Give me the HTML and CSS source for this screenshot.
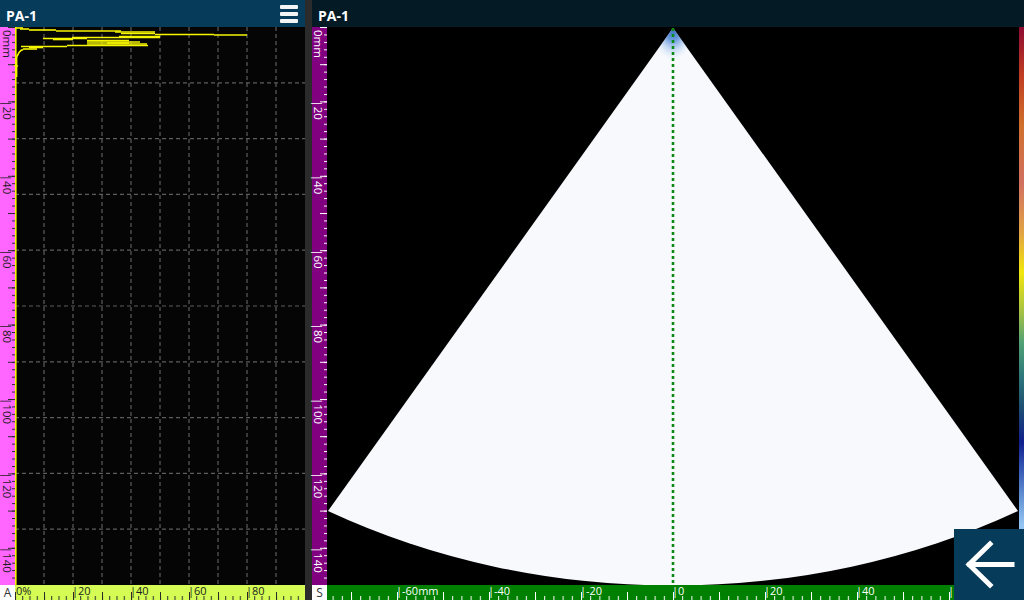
FILE: index.html
```html
<!DOCTYPE html>
<html lang="en">
<head>
    <meta charset="UTF-8">
    <meta name="viewport" content="width=device-width, initial-scale=1.0">
    <title>PA-1</title>
    <link rel="stylesheet" href="styles.css">
</head>
<body>
<div class="app">
    <!-- A-scan pane -->
    <section class="pane pane-a">
        <header class="bar bar-a">
            <span class="title">PA-1</span>
            <button class="menu" aria-label="Menu"><span></span><span></span><span></span></button>
        </header>
        <div class="view">
            <div class="ruler-v ruler-pink">
                <svg width="15" height="558" class="lbl-dark">
                    <defs>
                        <pattern id="a-minor" width="15" height="7.44" patternUnits="userSpaceOnUse"><rect x="12" y="0" width="3" height="1" fill="#2a2a2a"/></pattern>
                        <pattern id="a-mid" width="15" height="37.2" patternUnits="userSpaceOnUse"><rect x="8" y="0" width="7" height="1" fill="#2a2a2a"/></pattern>
                    </defs>
                    <rect width="15" height="558" fill="url(#a-minor)"/>
                    <rect width="15" height="558" fill="url(#a-mid)"/>
                    <text transform="translate(2.5,3) rotate(90)">0mm</text>
                    <text transform="translate(2.5,73.4) rotate(90)">|20</text>
                    <text transform="translate(2.5,147.8) rotate(90)">|40</text>
                    <text transform="translate(2.5,222.2) rotate(90)">|60</text>
                    <text transform="translate(2.5,296.6) rotate(90)">|80</text>
                    <text transform="translate(2.5,371) rotate(90)">|100</text>
                    <text transform="translate(2.5,445.4) rotate(90)">|120</text>
                    <text transform="translate(2.5,519.8) rotate(90)">|140</text>
                </svg>
            </div>
            <div class="plot">
                <svg width="290" height="558">
                    <g class="grid">
                        <line x1="29" y1="0" x2="29" y2="558"/>
                        <line x1="58" y1="0" x2="58" y2="558"/>
                        <line x1="87" y1="0" x2="87" y2="558"/>
                        <line x1="116" y1="0" x2="116" y2="558"/>
                        <line x1="145" y1="0" x2="145" y2="558"/>
                        <line x1="174" y1="0" x2="174" y2="558"/>
                        <line x1="203" y1="0" x2="203" y2="558"/>
                        <line x1="232" y1="0" x2="232" y2="558"/>
                        <line x1="261" y1="0" x2="261" y2="558"/>
                        <line x1="0" y1="55.8" x2="290" y2="55.8"/>
                        <line x1="0" y1="111.6" x2="290" y2="111.6"/>
                        <line x1="0" y1="167.4" x2="290" y2="167.4"/>
                        <line x1="0" y1="223.2" x2="290" y2="223.2"/>
                        <line x1="0" y1="279" x2="290" y2="279"/>
                        <line x1="0" y1="334.8" x2="290" y2="334.8"/>
                        <line x1="0" y1="390.6" x2="290" y2="390.6"/>
                        <line x1="0" y1="446.4" x2="290" y2="446.4"/>
                        <line x1="0" y1="502.2" x2="290" y2="502.2"/>
                    </g>
                    <g class="echo">
                        <line x1="0.8" y1="0" x2="0.8" y2="558" stroke-width="1.3"/>
                        <line x1="1" y1="1" x2="8" y2="1" stroke-width="2"/>
                        <line x1="5" y1="2" x2="14" y2="2"/>
                        <line x1="14" y1="3" x2="41" y2="3"/>
                        <line x1="41" y1="4" x2="106" y2="4"/>
                        <line x1="100" y1="5" x2="140" y2="5"/>
                        <line x1="106" y1="6.5" x2="140" y2="6.5" stroke-width="2.6"/>
                        <line x1="140" y1="7.5" x2="199" y2="7.5" stroke-width="2.6"/>
                        <line x1="199" y1="8" x2="232" y2="8"/>
                        <line x1="104" y1="9.5" x2="145" y2="9.5" stroke-width="2"/>
                        <line x1="57" y1="10.5" x2="145" y2="10.5"/>
                        <line x1="28" y1="11.5" x2="72" y2="11.5"/>
                        <line x1="38" y1="12.5" x2="58" y2="12.5" stroke-width="2.4"/>
                        <line x1="72" y1="13.5" x2="114" y2="13.5"/>
                        <line x1="72" y1="15" x2="125" y2="15"/>
                        <line x1="92" y1="16" x2="114" y2="16" stroke-width="2.4"/>
                        <line x1="72" y1="17" x2="132" y2="17"/>
                        <line x1="52" y1="18.5" x2="133" y2="18.5" stroke-width="2"/>
                        <line x1="6" y1="19.5" x2="52" y2="19.5"/>
                        <line x1="14" y1="20.5" x2="28" y2="20.5" stroke-width="2.4"/>
                        <line x1="8" y1="22" x2="22" y2="22"/>
                        <polyline points="8,22.5 6,23.5 4,25.5 3,27.5 2,29 1.6,31 1.6,38 0.5,38.5 2.2,39 1.6,40 1.6,50"/>
                    </g>
                </svg>
            </div>
        </div>
        <div class="axis">
            <div class="corner">A</div>
            <div class="ruler-h ruler-amp">
                <svg width="290" height="15" class="lbl-dark">
                    <defs>
                        <pattern id="amp-minor" width="7.25" height="15" patternUnits="userSpaceOnUse"><rect x="0" y="11" width="1" height="4" fill="#2a2a2a"/></pattern>
                        <pattern id="amp-mid" width="29" height="15" patternUnits="userSpaceOnUse"><rect x="0" y="7" width="1" height="8" fill="#2a2a2a"/></pattern>
                    </defs>
                    <rect width="290" height="15" fill="url(#amp-minor)"/>
                    <rect width="290" height="15" fill="url(#amp-mid)"/>
                    <text x="1" y="10">0%</text>
                    <text x="57" y="10">|20</text>
                    <text x="115" y="10">|40</text>
                    <text x="173" y="10">|60</text>
                    <text x="231" y="10">|80</text>
                </svg>
            </div>
        </div>
    </section>

    <div class="divider"></div>

    <!-- Sector scan pane -->
    <section class="pane pane-s">
        <header class="bar bar-s">
            <span class="title">PA-1</span>
        </header>
        <div class="view">
            <div class="ruler-v ruler-purple">
                <svg width="15" height="558" class="lbl-light">
                    <defs>
                        <pattern id="s-minor" width="15" height="7.44" patternUnits="userSpaceOnUse"><rect x="12" y="0" width="3" height="1" fill="#fff"/></pattern>
                        <pattern id="s-mid" width="15" height="37.2" patternUnits="userSpaceOnUse"><rect x="8" y="0" width="7" height="1" fill="#fff"/></pattern>
                    </defs>
                    <rect width="15" height="558" fill="url(#s-minor)"/>
                    <rect width="15" height="558" fill="url(#s-mid)"/>
                    <text transform="translate(1.5,3) rotate(90)">0mm</text>
                    <text transform="translate(1.5,73.4) rotate(90)">|20</text>
                    <text transform="translate(1.5,147.8) rotate(90)">|40</text>
                    <text transform="translate(1.5,222.2) rotate(90)">|60</text>
                    <text transform="translate(1.5,296.6) rotate(90)">|80</text>
                    <text transform="translate(1.5,371) rotate(90)">|100</text>
                    <text transform="translate(1.5,445.4) rotate(90)">|120</text>
                    <text transform="translate(1.5,519.8) rotate(90)">|140</text>
                </svg>
            </div>
            <div class="sector">
                <svg width="692" height="558">
                    <defs>
                        <clipPath id="fan-clip"><path d="M346,1 L1,484 A690,557 0 0 0 691,484 Z"/></clipPath>
                        <radialGradient id="apex-glow" cx="0.5" cy="0.25" r="0.6">
                            <stop offset="0" stop-color="#2a62bc" stop-opacity="1"/>
                            <stop offset="0.4" stop-color="#4a86d4" stop-opacity="0.8"/>
                            <stop offset="0.75" stop-color="#a8c8ee" stop-opacity="0.4"/>
                            <stop offset="1" stop-color="#dce9f8" stop-opacity="0"/>
                        </radialGradient>
                    </defs>
                    <path class="fan" d="M346,1 L1,484 A690,557 0 0 0 691,484 Z"/>
                    <ellipse cx="346" cy="14" rx="18" ry="28" fill="url(#apex-glow)" clip-path="url(#fan-clip)"/>
                    <line class="beam" x1="346" y1="1" x2="346" y2="558"/>
                </svg>
            </div>
            <div class="palette"></div>
        </div>
        <div class="axis">
            <div class="corner">S</div>
            <div class="ruler-h ruler-scan">
                <svg width="697" height="15" class="lbl-light">
                    <defs>
                        <pattern id="scan-minor" x="5.6" width="9.2" height="15" patternUnits="userSpaceOnUse"><rect x="0" y="11" width="1" height="4" fill="#fff"/></pattern>
                        <pattern id="scan-mid" x="24" width="46" height="15" patternUnits="userSpaceOnUse"><rect x="0" y="7" width="1" height="8" fill="#fff"/></pattern>
                    </defs>
                    <rect width="697" height="15" fill="url(#scan-minor)"/>
                    <rect width="697" height="15" fill="url(#scan-mid)"/>
                    <text x="69" y="10">|-60mm</text>
                    <text x="161" y="10">|-40</text>
                    <text x="253" y="10">|-20</text>
                    <text x="345" y="10">|0</text>
                    <text x="437" y="10">|20</text>
                    <text x="529" y="10">|40</text>
                    <text x="621" y="10">|60</text>
                </svg>
            </div>
        </div>
    </section>

    <button class="back" aria-label="Back">
        <svg width="70" height="71" viewBox="0 0 70 71">
            <polyline points="36,15 15,35.5 36,56" />
            <line x1="16" y1="35.5" x2="58" y2="35.5"/>
        </svg>
    </button>
</div>
</body>
</html>
```

FILE: styles.css
```css
body {
    margin: 0;
    padding: 0;
    background: #000;
    font-family: "Open Sans", Arial, sans-serif;
    overflow: hidden;
}
.app {
    display: flex;
    width: 1024px;
    height: 600px;
    position: relative;
}
.pane {
    display: flex;
    flex-direction: column;
}
.pane-a {
    width: 305px;
}
.pane-s {
    width: 712px;
}
.divider {
    width: 7px;
    background: #2b2b2b;
}
.bar {
    height: 27px;
    display: flex;
    align-items: center;
    justify-content: space-between;
    padding: 0 6px;
    box-sizing: border-box;
}
.bar-a {
    background: #073b5a;
}
.bar-s {
    background: #041a24;
}
.title {
    color: #fff;
    font-weight: bold;
    font-size: 14px;
    padding-top: 3px;
}
.menu {
    display: flex;
    flex-direction: column;
    gap: 3px;
    width: 18px;
    padding: 0;
    margin-right: 1px;
    background: none;
    border: none;
}
.menu span {
    display: block;
    height: 4px;
    background: #f2f4f6;
    border-radius: 1px;
}
.view {
    flex: 1;
    display: flex;
    height: 558px;
}
.ruler-v {
    width: 15px;
}
.ruler-v svg, .ruler-h svg, .plot svg, .sector svg {
    display: block;
    overflow: visible;
}
.ruler-pink {
    background: #ff66ff;
}
.ruler-purple {
    background: #800080;
}
.lbl-dark text {
    font: 11.5px "Open Sans", Arial, sans-serif;
    fill: #1c1c1c;
}
.lbl-light text {
    font: 11.5px "Open Sans", Arial, sans-serif;
    fill: #fff;
}
.ruler-h text {
    font-size: 11px;
}
.plot {
    width: 290px;
    background: #050505;
}
.grid line {
    stroke: #5e5e5e;
    stroke-width: 1.2;
    stroke-dasharray: 4 3;
}
.echo line, .echo polyline {
    stroke: #f6f600;
    stroke-width: 1.6;
    fill: none;
}
.sector {
    width: 692px;
    background: #000;
}
.fan {
    fill: #f7f9fd;
}
.beam {
    stroke: #0b8a14;
    stroke-width: 2.6;
    stroke-dasharray: 3 3;
}
.palette {
    width: 5px;
    background: linear-gradient(to bottom,
        #8e0b32 0%, #c03c22 8.6%, #d0702c 17.6%, #d27060 28%,
        #e2a444 37%, #f2e60c 44%, #a6c244 51%, #52a274 56.5%,
        #2e7a7c 62.4%, #1e5072 68%, #10208e 74.4%, #3456b4 79%,
        #6494d4 84.4%, #92c2f2 89%, #a8d2f8 100%);
}
.axis {
    display: flex;
    height: 15px;
}
.corner {
    width: 15px;
    background: #fff;
    color: #333;
    font-size: 12px;
    line-height: 15px;
    text-align: center;
}
.ruler-h {
    flex: 1;
}
.ruler-amp {
    background: #d4fc54;
}
.ruler-scan {
    background: #008000;
}
.back {
    position: absolute;
    right: 0;
    bottom: 0;
    width: 70px;
    height: 71px;
    padding: 0;
    border: none;
    background: #073b5a;
}
.back svg {
    display: block;
}
.back polyline, .back line {
    stroke: #fff;
    stroke-width: 5;
    fill: none;
    stroke-linecap: square;
}
```
